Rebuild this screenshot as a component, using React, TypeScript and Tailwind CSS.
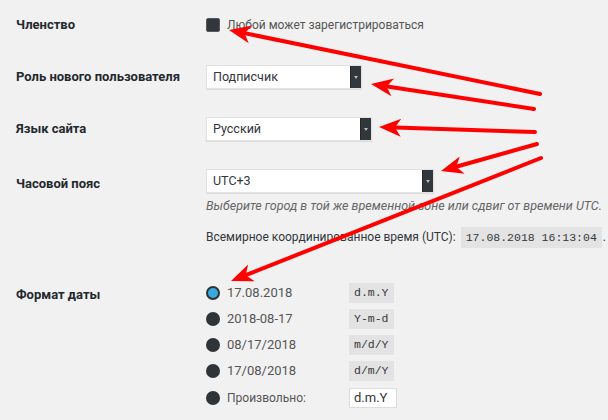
import React from "react";

type Pt = [number, number];

// red annotation arrows, tail -> tip
const arrows: { from: Pt; to: Pt }[] = [
  { from: [540, 94], to: [229, 30] },
  { from: [534, 109], to: [371, 84] },
  { from: [535, 132], to: [379, 127] },
  { from: [537, 144], to: [441, 171] },
  { from: [541, 158], to: [231, 281] },
];

function Arrow({ from, to }: { from: Pt; to: Pt }) {
  const dx = to[0] - from[0];
  const dy = to[1] - from[1];
  const len = Math.hypot(dx, dy);
  const ux = dx / len;
  const uy = dy / len;
  const nx = -uy;
  const ny = ux;
  const L = 22;
  const W = 9;
  const back = (d: number, s: number): string =>
    `${to[0] - ux * d + nx * s},${to[1] - uy * d + ny * s}`;
  const head = [`${to[0]},${to[1]}`, back(L, W), back(L * 0.72, 0), back(L, -W)].join(" ");
  const endX = to[0] - ux * (L * 0.75);
  const endY = to[1] - uy * (L * 0.75);
  return (
    <g>
      <line x1={from[0]} y1={from[1]} x2={endX} y2={endY} stroke="#ff0000" strokeWidth={4} strokeLinecap="round" />
      <polygon points={head} fill="#ff0000" />
    </g>
  );
}

function Select({ value, width }: { value: string; width: string }) {
  return (
    <div className={`flex h-[24px] ${width} shrink-0 bg-white shadow-[0_1px_1px_rgba(0,0,0,0.08)] border border-[#e2e2e2]`}>
      <span className="flex-1 pl-[6px] leading-[22px] text-[12.5px] text-[#32373c]">{value}</span>
      <span className="flex w-[11px] items-center justify-center bg-[#32373c] border-l border-[#23282d]">
        <span className="w-0 h-0 border-l-[2.5px] border-r-[2.5px] border-t-[3px] border-l-transparent border-r-transparent border-t-[#bbb]" />
      </span>
    </div>
  );
}

function Radio({ checked }: { checked?: boolean }) {
  return checked ? (
    <span className="shrink-0 w-[14px] h-[14px] rounded-full bg-[#39a9e0] border-[2px] border-[#2d3338]" />
  ) : (
    <span className="shrink-0 w-[14px] h-[14px] rounded-full bg-[#2f3439]" />
  );
}

const formats = [
  { text: "17.08.2018", code: "d.m.Y", checked: true },
  { text: "2018-08-17", code: "Y-m-d" },
  { text: "08/17/2018", code: "m/d/Y" },
  { text: "17/08/2018", code: "d/m/Y" },
];

export default function App() {
  return (
    <div className="relative w-[608px] h-[420px] overflow-hidden bg-[#f1f1f1] text-[12px] text-[#444] font-['Roboto',sans-serif]">
      <div className="flex flex-col pl-[16px]">
        {/* Членство */}
        <div className="flex items-center h-[30px] mt-[10px]">
          <div className="w-[190px] shrink-0 text-[13px] font-bold text-[#23282d]">Членство</div>
          <label className="flex items-center gap-[7px]">
            <span className="w-[14px] h-[14px] rounded-[2px] bg-[#32373c] border border-[#55595e]" />
            <span className="text-[12px] text-[#555]">Любой может зарегистрироваться</span>
          </label>
        </div>

        <div className="flex items-center h-[24px] mt-[25px]">
          <div className="w-[190px] shrink-0 text-[13px] font-bold text-[#23282d]">Роль нового пользователя</div>
          <Select value="Подписчик" width="w-[156px]" />
        </div>

        <div className="flex items-center h-[24px] mt-[28px]">
          <div className="w-[190px] shrink-0 text-[13px] font-bold text-[#23282d]">Язык сайта</div>
          <Select value="Русский" width="w-[166px]" />
        </div>

        <div className="flex mt-[28px]">
          <div className="w-[190px] shrink-0 pt-[5px] text-[13px] font-bold text-[#23282d]">Часовой пояс</div>
          <div className="flex flex-col">
            <Select value="UTC+3" width="w-[228px]" />
            <p className="mt-[4px] italic text-[12.5px] text-[#666] whitespace-nowrap">Выберите город в той же временной зоне или сдвиг от времени UTC.</p>
            <p className="mt-[11px] flex items-center whitespace-nowrap text-[#32373c]">
              <span>Всемирное координированное время (UTC):</span>
              <code className="ml-[5px] bg-[#e3e3e3] px-[5px] py-[2px] font-['Liberation_Mono',monospace] text-[11.5px] text-[#32373c]">17.08.2018 16:13:04</code>
              <span className="ml-[1px]">.</span>
            </p>
          </div>
        </div>

        <div className="flex mt-[36px]">
          <div className="w-[190px] shrink-0 pt-[1px] text-[13px] font-bold text-[#23282d]">Формат даты</div>
          <div className="flex flex-col gap-[8px] text-[13px] text-[#555]">
            {formats.map((f) => (
              <div key={f.code} className="flex items-center h-[18px]">
                <Radio checked={f.checked} />
                <span className="w-[129px] pl-[7px]">{f.text}</span>
                <code className="bg-[#e3e3e3] px-[5px] py-[1px] font-['Liberation_Mono',monospace] text-[11.5px] text-[#32373c]">{f.code}</code>
              </div>
            ))}
            <div className="flex items-center h-[20px]">
              <Radio />
              <span className="w-[129px] pl-[7px] text-[12px]">Произвольно:</span>
              <span className="w-[48px] h-[20px] bg-white border border-[#ddd] pl-[4px] leading-[18px] text-[#32373c]">d.m.Y</span>
            </div>
          </div>
        </div>
      </div>

      <svg className="absolute inset-0 pointer-events-none" width={608} height={420} viewBox="0 0 608 420">
        {arrows.map((a, i) => (
          <Arrow key={i} from={a.from} to={a.to} />
        ))}
      </svg>
    </div>
  );
}
